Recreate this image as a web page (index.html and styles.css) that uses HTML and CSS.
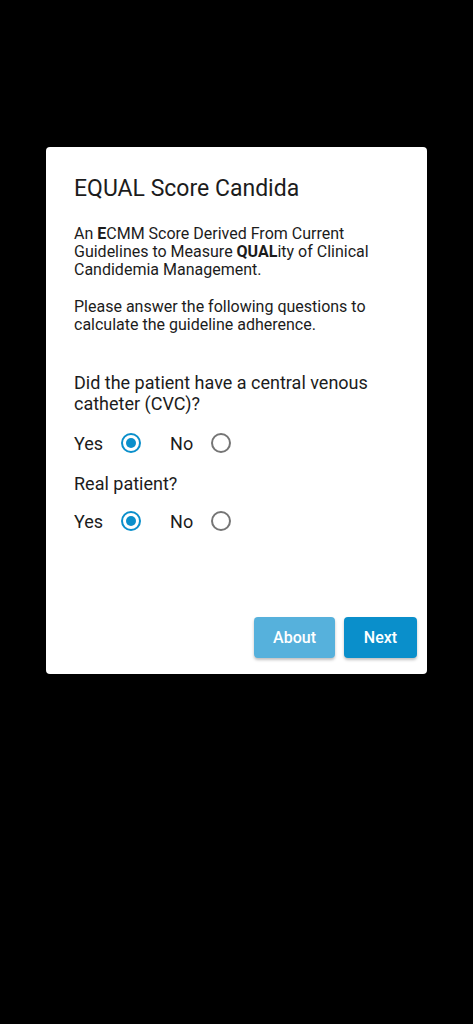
FILE: index.html
```html
<!DOCTYPE html>
<html>
<head>
<meta charset="utf-8">
<link rel="stylesheet" href="styles.css">
</head>
<body>
<div class="card">
  <h1 class="title">EQUAL Score Candida</h1>
  <p class="intro">An <b>E</b>CMM Score Derived From Current Guidelines to Measure <b>QUAL</b>ity of Clinical Candidemia Management.</p>
  <p class="intro second">Please answer the following questions to calculate the guideline adherence.</p>

  <p class="question first">Did the patient have a central venous catheter (CVC)?</p>
  <div class="choices">
    <span class="opt">Yes</span><span class="radio checked"></span>
    <span class="opt no">No</span><span class="radio"></span>
  </div>

  <p class="question second-q">Real patient?</p>
  <div class="choices last">
    <span class="opt">Yes</span><span class="radio checked"></span>
    <span class="opt no">No</span><span class="radio"></span>
  </div>

  <div class="actions">
    <button class="btn light">About</button>
    <button class="btn dark">Next</button>
  </div>
</div>
</body>
</html>
```
FILE: styles.css
```css
html, body {
  margin: 0;
  padding: 0;
  background: #000;
}
body {
  padding-top: 147px;
  font-family: Roboto, "Liberation Sans", sans-serif;
  color: #1c1c1c;
}
.card {
  box-sizing: border-box;
  width: 381px;
  height: 527px;
  margin: 0 auto;
  background: #fff;
  border-radius: 4px;
  padding: 28px 10px 16px 28px;
  display: flex;
  flex-direction: column;
}
.title {
  margin: 0;
  font-size: 23px;
  font-weight: 400;
  line-height: 27px;
}
.intro {
  margin: 23px 0 0 0;
  font-size: 16px;
  line-height: 18px;
  padding-right: 9px;
}
.intro b {
  font-weight: 700;
}
.intro.second {
  margin-top: 19px;
}
.question {
  margin: 8px 0 0 0;
  font-size: 18px;
  line-height: 21px;
  padding-right: 9px;
}
.question.first {
  margin-top: 38px;
}
.question.second-q {
  margin-top: 10px;
}
.choices {
  margin-top: 9px;
  height: 40px;
  display: flex;
  align-items: center;
  font-size: 18px;
}
.choices.last {
  margin-top: 7px;
}
.opt.no {
  margin-left: 29px;
}
.radio {
  box-sizing: border-box;
  width: 20px;
  height: 20px;
  margin-left: 18px;
  border-radius: 50%;
  border: 2px solid #757575;
  display: flex;
  align-items: center;
  justify-content: center;
}
.radio.checked {
  border-color: #0a8fcb;
}
.radio.checked::after {
  content: "";
  width: 10px;
  height: 10px;
  border-radius: 50%;
  background: #0a8fcb;
}
.actions {
  margin-top: auto;
  display: flex;
  justify-content: flex-end;
  gap: 9px;
}
.btn {
  height: 41px;
  border: none;
  border-radius: 4px;
  color: #fff;
  font-family: Roboto, "Liberation Sans", sans-serif;
  font-size: 16px;
  font-weight: 500;
  box-shadow: 0 2px 3px rgba(0,0,0,0.25);
}
.btn.light {
  width: 81px;
  background: #56b1dc;
}
.btn.dark {
  width: 73px;
  background: #0a8fcb;
}
```
